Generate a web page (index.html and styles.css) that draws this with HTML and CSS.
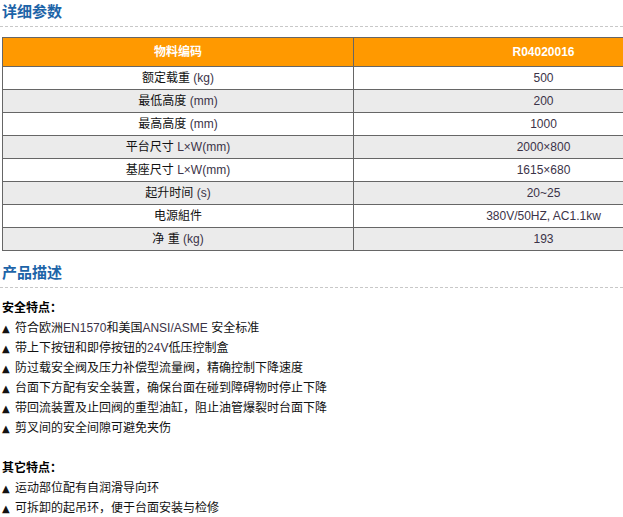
FILE: index.html
```html
<!DOCTYPE html>
<html lang="zh-CN">
<head>
<meta charset="utf-8">
<title>详细参数</title>
<link rel="stylesheet" href="styles.css">
</head>
<body>
<div class="page">
  <h2 class="sec-title">详细参数</h2>
  <div class="table-wrap">
    <table class="params">
      <colgroup><col class="c1"><col class="c2"></colgroup>
      <thead>
        <tr><th>物料编码</th><th>R04020016</th></tr>
      </thead>
      <tbody>
        <tr><td>额定载重 <span class="en">(kg)</span></td><td class="en">500</td></tr>
        <tr><td>最低高度 <span class="en">(mm)</span></td><td class="en">200</td></tr>
        <tr><td>最高高度 <span class="en">(mm)</span></td><td class="en">1000</td></tr>
        <tr><td>平台尺寸 <span class="en">L×W(mm)</span></td><td class="en">2000×800</td></tr>
        <tr><td>基座尺寸 <span class="en">L×W(mm)</span></td><td class="en">1615×680</td></tr>
        <tr><td>起升时间 <span class="en">(s)</span></td><td class="en">20~25</td></tr>
        <tr><td>电源組件</td><td class="en">380V/50HZ, AC1.1kw</td></tr>
        <tr><td>净 重 <span class="en">(kg)</span></td><td class="en">193</td></tr>
      </tbody>
    </table>
  </div>

  <h2 class="sec-title second">产品描述</h2>
  <div class="desc">
    <p class="sub">安全特点：</p>
    <p><span class="tri">▲</span> 符合欧洲<span class="en">EN1570</span>和美国<span class="en">ANSI/ASME</span> 安全标准</p>
    <p><span class="tri">▲</span> 带上下按钮和即停按钮的<span class="en">24V</span>低压控制盒</p>
    <p><span class="tri">▲</span> 防过载安全阀及压力补偿型流量阀，精确控制下降速度</p>
    <p><span class="tri">▲</span> 台面下方配有安全装置，确保台面在碰到障碍物时停止下降</p>
    <p><span class="tri">▲</span> 带回流装置及止回阀的重型油缸，阻止油管爆裂时台面下降</p>
    <p><span class="tri">▲</span> 剪叉间的安全间隙可避免夹伤</p>
    <p class="blank">&nbsp;</p>
    <p class="sub">其它特点：</p>
    <p><span class="tri">▲</span> 运动部位配有自润滑导向环</p>
    <p><span class="tri">▲</span> 可拆卸的起吊环，便于台面安装与检修</p>
  </div>
</div>
</body>
</html>
```

FILE: styles.css
```css
html, body {
  margin: 0;
  padding: 0;
  background: #ffffff;
  overflow: hidden;
}

body {
  font-family: "Liberation Sans", "Noto Sans CJK SC", sans-serif;
  font-size: 12px;
  color: #111111;
}

.page {
  width: 623px;
  overflow: hidden;
}

.sec-title {
  margin: 0;
  padding: 2px 0 4px 2px;
  height: 20px;
  font-size: 15px;
  line-height: 20px;
  font-weight: bold;
  color: #1d64a8;
  border-bottom: 1px dashed #c8c8c8;
}

.sec-title.second {
  margin-top: 10px;
}

.table-wrap {
  margin-top: 10px;
  padding-left: 2px;
  width: 760px;
}

.params {
  width: 731px;
  border-collapse: collapse;
  table-layout: fixed;
}

.params col.c1 { width: 351px; }
.params col.c2 { width: 380px; }

.params th,
.params td {
  border: 1px solid #666666;
  text-align: center;
  padding: 0;
  font-size: 12px;
  line-height: 14px;
}

.params th {
  height: 28px;
  background: #ff9900;
  color: #ffffff;
  font-weight: bold;
}

.params td {
  height: 22px;
  color: #111111;
}

.params tbody tr:nth-child(even) td {
  background: #ebebeb;
}

.en {
  color: #3b3348;
}

.params td.en {
  color: #3b3348;
}

.desc {
  margin-top: 10px;
  padding-left: 2px;
}

.desc p {
  margin: 0;
  height: 20px;
  line-height: 20px;
  font-size: 12px;
  color: #111111;
  white-space: nowrap;
}

.desc p.sub {
  font-weight: bold;
  color: #000000;
}

.tri {
  font-family: "DejaVu Sans", sans-serif;
  font-size: 10px;
  color: #111111;
  margin-right: 2px;
}
```
